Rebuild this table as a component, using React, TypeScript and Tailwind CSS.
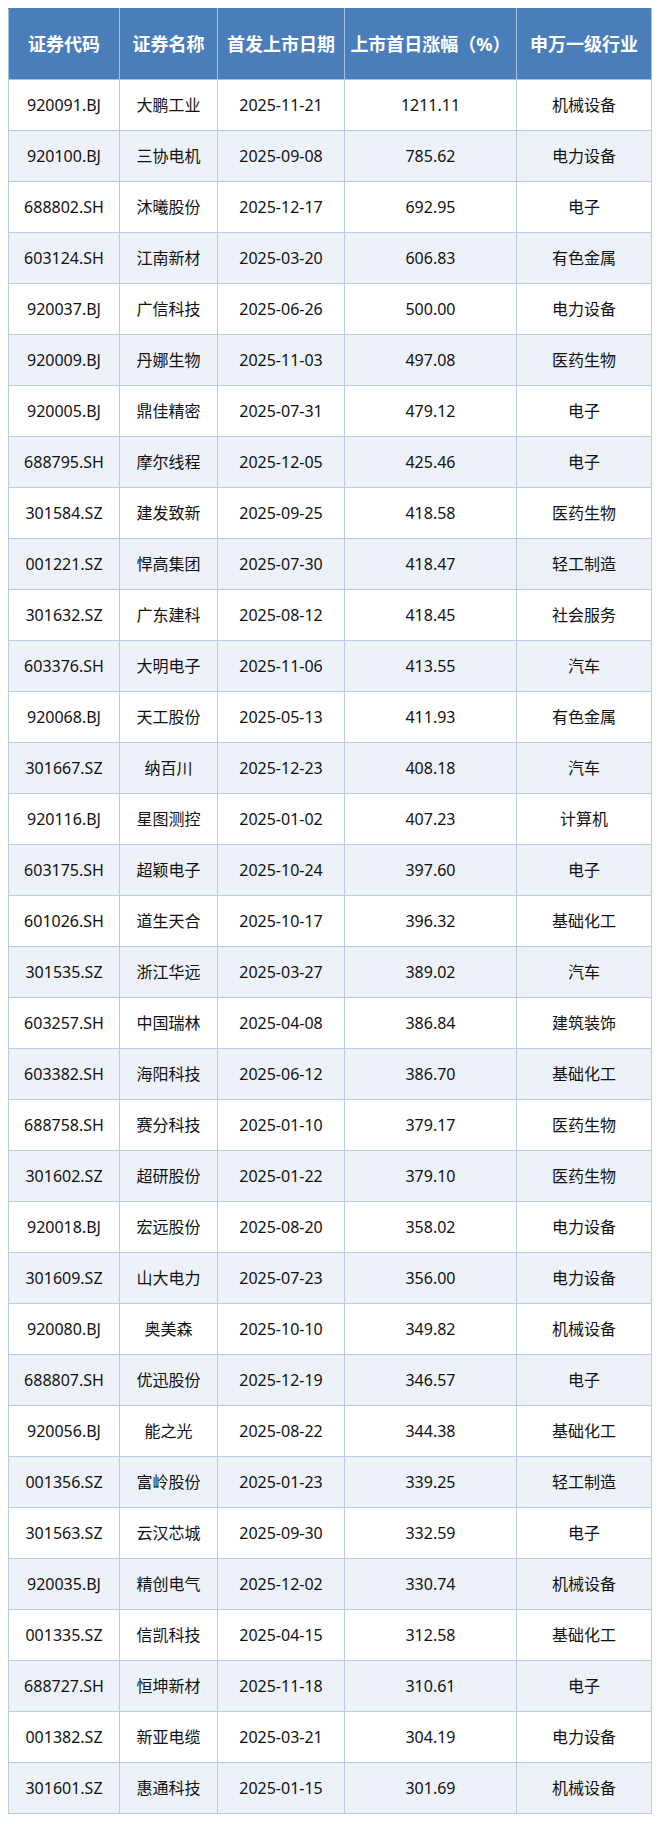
const rows: [string, string, string, string, string][] = [
    ['920091.BJ', '大鹏工业', '2025-11-21', '1211.11', '机械设备'],
    ['920100.BJ', '三协电机', '2025-09-08', '785.62', '电力设备'],
    ['688802.SH', '沐曦股份', '2025-12-17', '692.95', '电子'],
    ['603124.SH', '江南新材', '2025-03-20', '606.83', '有色金属'],
    ['920037.BJ', '广信科技', '2025-06-26', '500.00', '电力设备'],
    ['920009.BJ', '丹娜生物', '2025-11-03', '497.08', '医药生物'],
    ['920005.BJ', '鼎佳精密', '2025-07-31', '479.12', '电子'],
    ['688795.SH', '摩尔线程', '2025-12-05', '425.46', '电子'],
    ['301584.SZ', '建发致新', '2025-09-25', '418.58', '医药生物'],
    ['001221.SZ', '悍高集团', '2025-07-30', '418.47', '轻工制造'],
    ['301632.SZ', '广东建科', '2025-08-12', '418.45', '社会服务'],
    ['603376.SH', '大明电子', '2025-11-06', '413.55', '汽车'],
    ['920068.BJ', '天工股份', '2025-05-13', '411.93', '有色金属'],
    ['301667.SZ', '纳百川', '2025-12-23', '408.18', '汽车'],
    ['920116.BJ', '星图测控', '2025-01-02', '407.23', '计算机'],
    ['603175.SH', '超颖电子', '2025-10-24', '397.60', '电子'],
    ['601026.SH', '道生天合', '2025-10-17', '396.32', '基础化工'],
    ['301535.SZ', '浙江华远', '2025-03-27', '389.02', '汽车'],
    ['603257.SH', '中国瑞林', '2025-04-08', '386.84', '建筑装饰'],
    ['603382.SH', '海阳科技', '2025-06-12', '386.70', '基础化工'],
    ['688758.SH', '赛分科技', '2025-01-10', '379.17', '医药生物'],
    ['301602.SZ', '超研股份', '2025-01-22', '379.10', '医药生物'],
    ['920018.BJ', '宏远股份', '2025-08-20', '358.02', '电力设备'],
    ['301609.SZ', '山大电力', '2025-07-23', '356.00', '电力设备'],
    ['920080.BJ', '奥美森', '2025-10-10', '349.82', '机械设备'],
    ['688807.SH', '优迅股份', '2025-12-19', '346.57', '电子'],
    ['920056.BJ', '能之光', '2025-08-22', '344.38', '基础化工'],
    ['001356.SZ', '富岭股份', '2025-01-23', '339.25', '轻工制造'],
    ['301563.SZ', '云汉芯城', '2025-09-30', '332.59', '电子'],
    ['920035.BJ', '精创电气', '2025-12-02', '330.74', '机械设备'],
    ['001335.SZ', '信凯科技', '2025-04-15', '312.58', '基础化工'],
    ['688727.SH', '恒坤新材', '2025-11-18', '310.61', '电子'],
    ['001382.SZ', '新亚电缆', '2025-03-21', '304.19', '电力设备'],
    ['301601.SZ', '惠通科技', '2025-01-15', '301.69', '机械设备'],
];

const headers = ['证券代码', '证券名称', '首发上市日期', '上市首日涨幅（%）', '申万一级行业'];
const widths = ['w-[111px]', 'w-[98px]', 'w-[127px]', 'w-[172px]', 'w-[135px]'];

export default function App() {
    return (
        <div className="w-[660px] h-[1824px] bg-white p-2 font-['Noto_Sans','Noto_Sans_CJK_SC',sans-serif]">
            <table className="w-[643px] table-fixed border-collapse border border-[#4f81bd]">
                <colgroup>
                    {widths.map((w) => (
                        <col key={w} className={w} />
                    ))}
                </colgroup>
                <thead>
                    <tr className="h-[71px] bg-[#4a7ebb]">
                        {headers.map((h) => (
                            <th
                                key={h}
                                className="border border-[#a8c0e0] border-t-[#4f81bd] text-center text-[18px] font-bold text-white"
                            >
                                {h}
                            </th>
                        ))}
                    </tr>
                </thead>
                <tbody>
                    {rows.map((r, i) => (
                        <tr key={r[0]} className={`h-[51px] ${i % 2 === 1 ? 'bg-[#edf2f9]' : 'bg-white'}`}>
                            {r.map((c, j) => (
                                <td
                                    key={j}
                                    className="border border-[#b8cbe5] text-center text-[16px] text-[#111]"
                                >
                                    {c}
                                </td>
                            ))}
                        </tr>
                    ))}
                </tbody>
            </table>
        </div>
    );
}
